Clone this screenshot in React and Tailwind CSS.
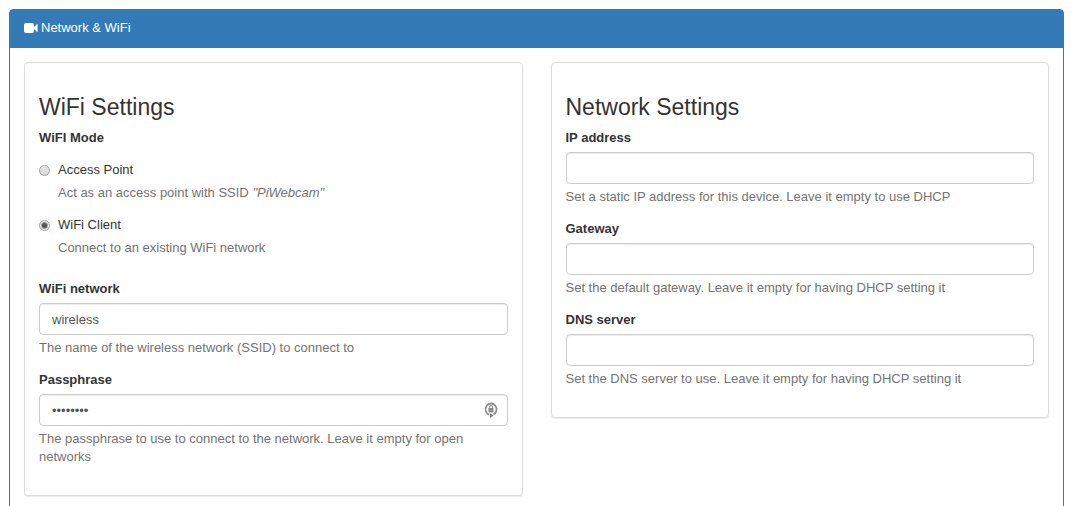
function VideoIcon() {
  return (
    <svg className="h-[10px] w-[14px] shrink-0" viewBox="0 0 14 10" fill="currentColor" aria-hidden="true">
      <path d="M2 0h6a2 2 0 0 1 2 2v6a2 2 0 0 1-2 2H2a2 2 0 0 1-2-2V2a2 2 0 0 1 2-2z" />
      <path d="M10 4 13.600.6v8.800L10 6z" />
    </svg>
  )
}

function PasswordManagerIcon() {
  return (
    <svg className="h-[16px] w-[14px]" viewBox="0 0 14 16" fill="none" aria-hidden="true">
      <path d="M5 12.700A5.500 5.800 0 1 1 9.500 12.500" stroke="#909090" strokeWidth="1.800" />
      <path d="M5.400 6.500V5.200a1.600 1.600 0 0 1 3.200 0v1.300" stroke="#909090" strokeWidth="1.100" />
      <rect x="4.500" y="6" width="5" height="4.400" fill="#8a8a8a" />
      <path d="M6 11.200 9.600 13.400 6 16z" fill="#7d7d7d" />
    </svg>
  )
}

function Well({ title, children }) {
  return (
    <section className="min-w-0 flex-1 rounded border border-[#ddd] bg-white px-[14px] pt-[14px] pb-[15px] shadow-[0_1px_1px_rgba(0,0,0,0.08)]">
      <h3 className="mt-[16px] mb-[8px] text-[23px] leading-[28px]">{title}</h3>
      {children}
    </section>
  )
}

function Field({ id, label, help, type = 'text', value, icon }) {
  return (
    <div className="mb-[14px]">
      <label htmlFor={id} className="mb-[5px] block font-bold">{label}</label>
      <div className="relative">
        <input
          id={id}
          type={type}
          defaultValue={value}
          className="block h-[32px] w-full rounded border border-[#ccc] bg-white px-[12px] text-[#555] shadow-[inset_0_1px_1px_rgba(0,0,0,0.075)]"
        />
        {icon && <span className="absolute inset-y-0 right-[10px] flex items-center">{icon}</span>}
      </div>
      <p className="mt-[4px] text-[#737373]">{help}</p>
    </div>
  )
}

function ModeOption({ id, label, checked, children }) {
  return (
    <div className="grid grid-cols-[11px_1fr] items-center gap-x-[8px] gap-y-[5px]">
      <input
        id={id}
        type="radio"
        name="mode"
        defaultChecked={checked}
        className="mt-px size-[11px] appearance-none rounded-full border border-[#a3a3a3] bg-linear-to-b from-[#e4e4e4] to-[#dadada] checked:bg-[radial-gradient(circle,#555_0_2px,#e8e8e8_4px)]"
      />
      <label htmlFor={id}>{label}</label>
      <p className="col-start-2 text-[#737373]">{children}</p>
    </div>
  )
}

export default function App() {
  return (
    <main className="bg-white pt-[9px] pr-[15px] pb-[9px] pl-[9px] font-['Liberation_Sans',Arial,sans-serif] text-[13px] leading-[18px] text-[#333]">
      <div className="rounded border border-[#337ab7]">
        <header className="flex items-center gap-[3px] bg-[#337ab7] px-[14px] pt-[9px] pb-[11px] text-white">
          <VideoIcon />
          <h2>Network &amp; WiFi</h2>
        </header>
        <form className="flex items-start gap-[28px] p-[14px]">
          <Well title="WiFi Settings">
            <fieldset className="mb-[23px]">
              <legend className="mb-[14px] font-bold">WiFI Mode</legend>
              <div className="flex flex-col gap-[14px]">
                <ModeOption id="mode-ap" label="Access Point">
                  Act as an access point with SSID <em>"PiWebcam"</em>
                </ModeOption>
                <ModeOption id="mode-client" label="WiFi Client" checked>
                  Connect to an existing WiFi network
                </ModeOption>
              </div>
            </fieldset>
            <Field
              id="ssid"
              label="WiFi network"
              value="wireless"
              help="The name of the wireless network (SSID) to connect to"
            />
            <Field
              id="passphrase"
              type="password"
              label="Passphrase"
              value="password"
              icon={<PasswordManagerIcon />}
              help="The passphrase to use to connect to the network. Leave it empty for open networks"
            />
          </Well>
          <Well title="Network Settings">
            <Field
              id="ip"
              label="IP address"
              help="Set a static IP address for this device. Leave it empty to use DHCP"
            />
            <Field
              id="gateway"
              label="Gateway"
              help="Set the default gateway. Leave it empty for having DHCP setting it"
            />
            <Field
              id="dns"
              label="DNS server"
              help="Set the DNS server to use. Leave it empty for having DHCP setting it"
            />
          </Well>
        </form>
      </div>
    </main>
  )
}
